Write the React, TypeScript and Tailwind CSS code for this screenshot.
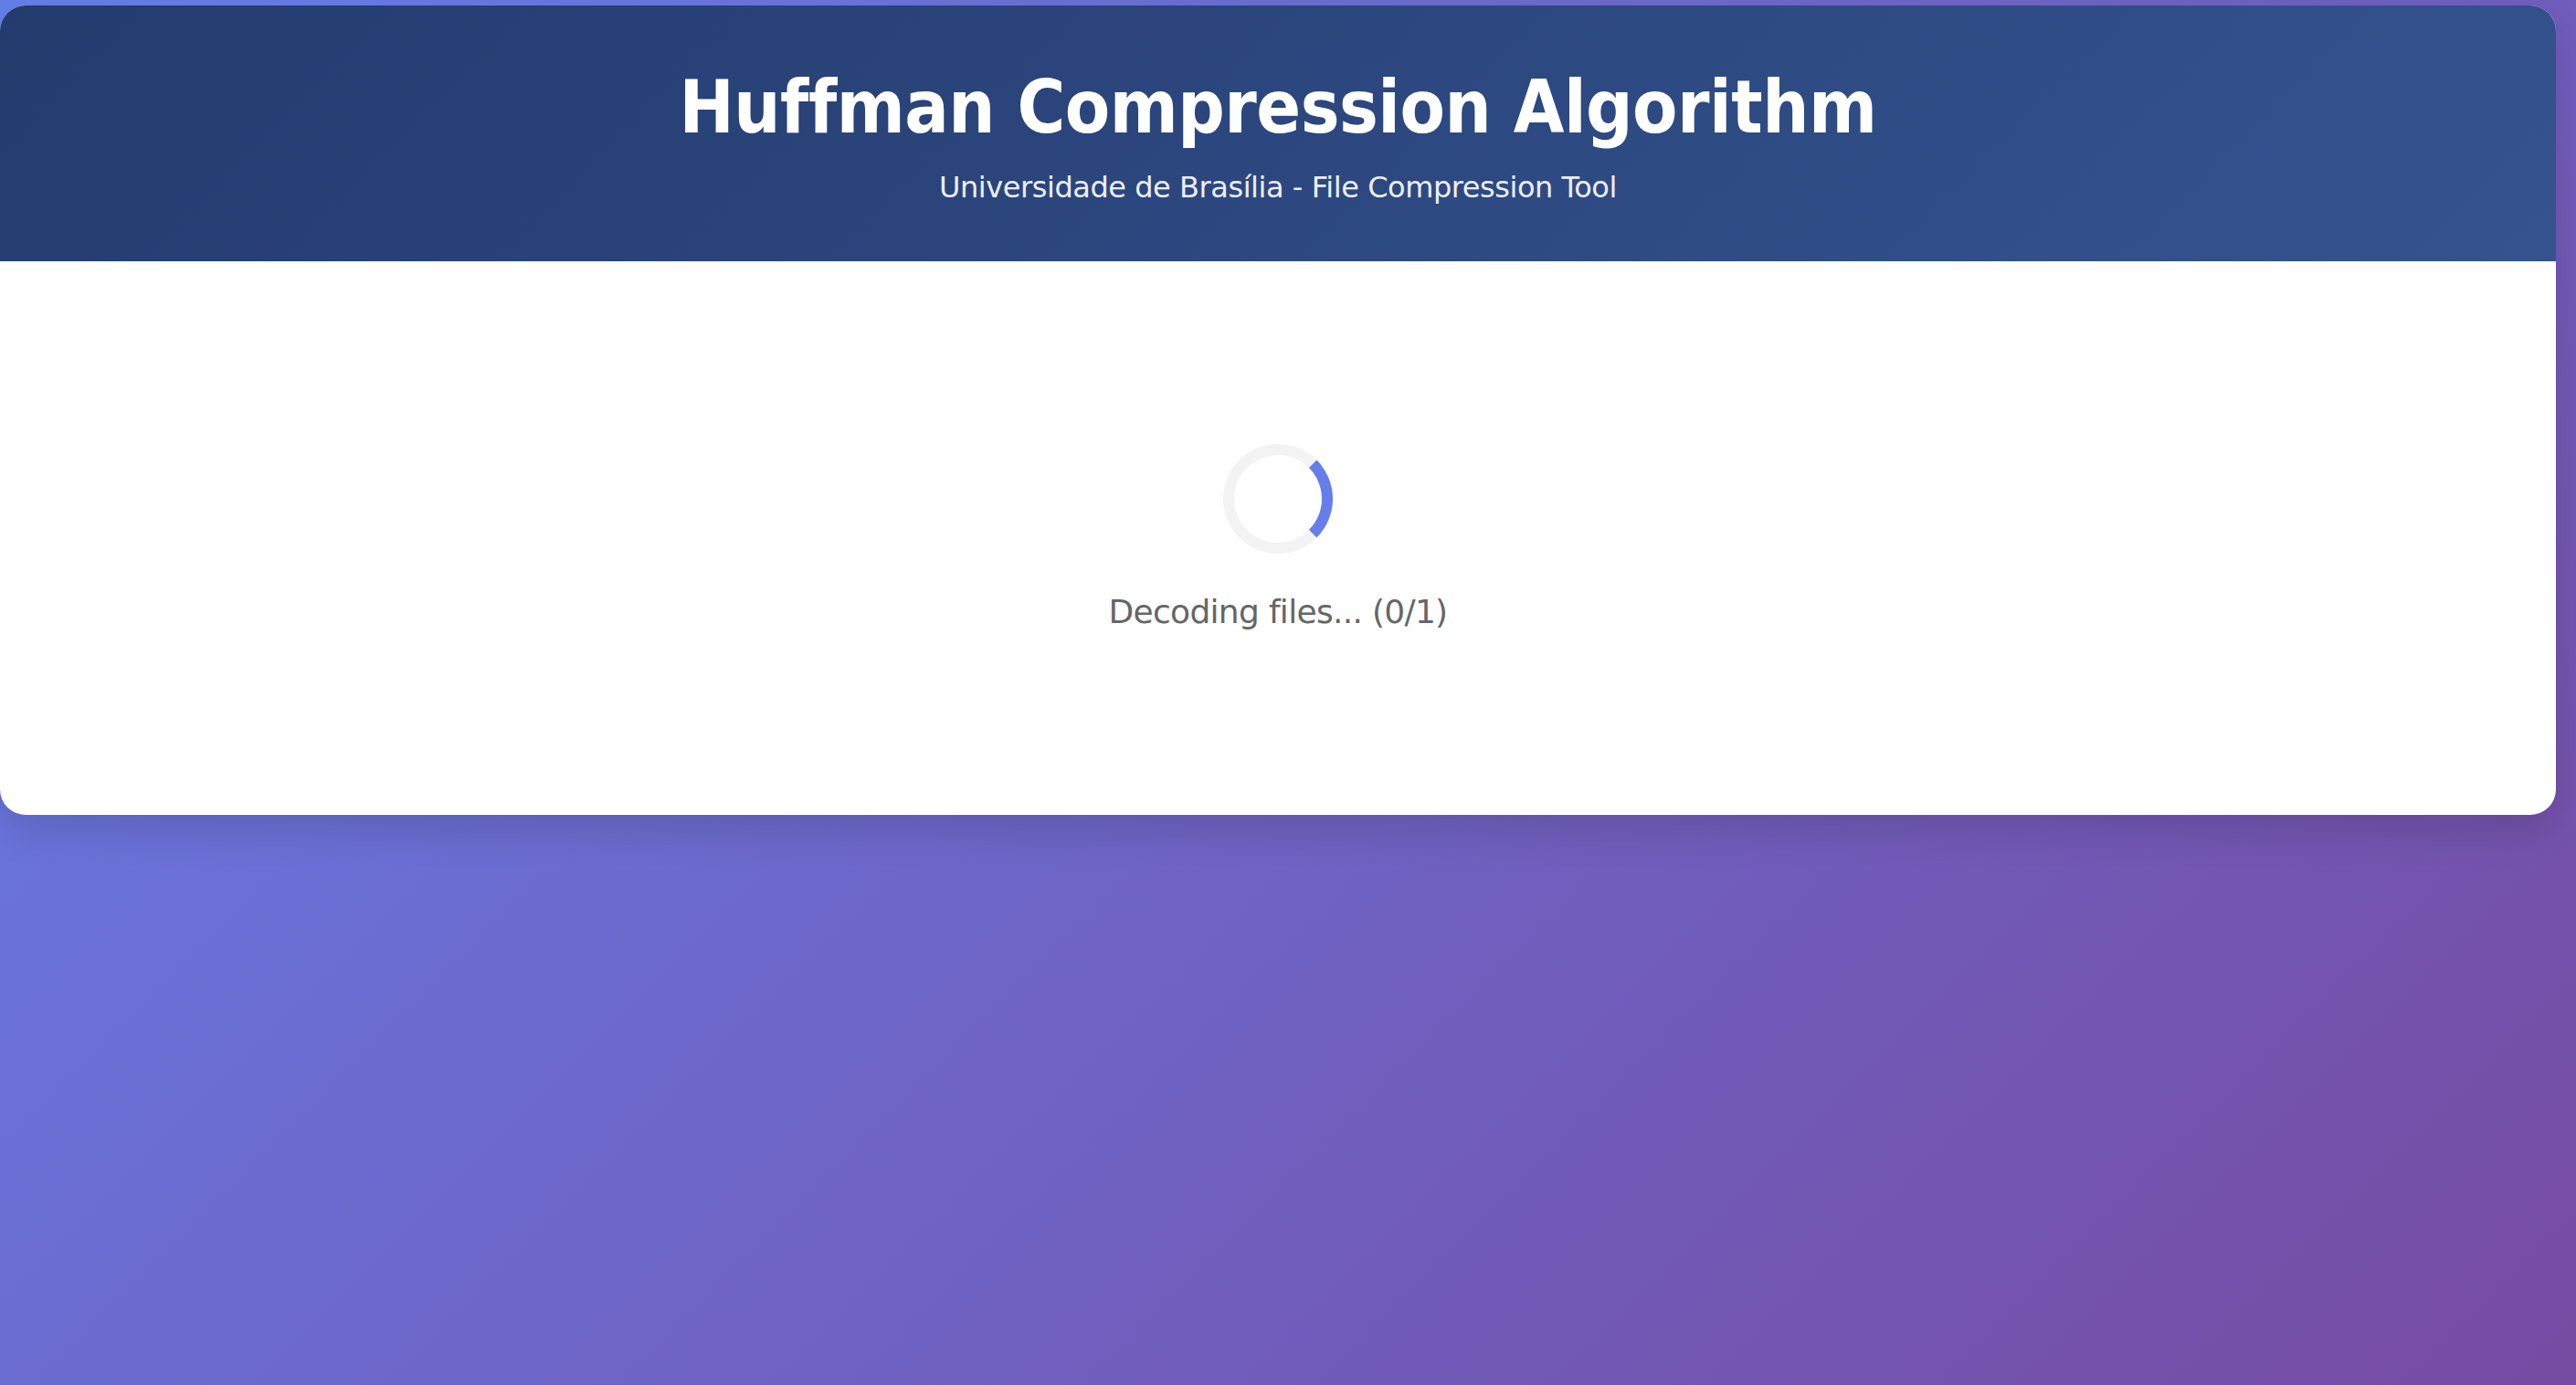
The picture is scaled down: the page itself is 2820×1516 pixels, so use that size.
export default function App() {
  return (
    <div className="min-h-[1516px] w-full bg-[linear-gradient(135deg,#667eea_0%,#764ba2_100%)] pt-[6px] overflow-hidden">
      <div className="w-[2798px] rounded-[28px] overflow-hidden bg-white shadow-[0_20px_40px_rgba(0,0,0,0.12)]">
        <div className="h-[280px] bg-[linear-gradient(135deg,#243b6e_0%,#34538f_100%)] pt-[64px] flex flex-col items-center text-white" style={{ fontFamily: '"DejaVu Sans", Verdana, sans-serif' }}>
          <h1 className="text-[80px] leading-[96px] font-bold tracking-[-0.5px] m-0" style={{ fontFamily: '"DejaVu Sans Condensed", "DejaVu Sans", sans-serif' }}>Huffman Compression Algorithm</h1>
          <p className="mt-[15px] text-[32px] leading-[48px] text-[#eceef6] tracking-[-0.45px]">Universidade de Brasília - File Compression Tool</p>
        </div>
        <div className="h-[606px] pt-[200px] flex flex-col items-center" style={{ fontFamily: '"DejaVu Sans", Verdana, sans-serif' }}>
          <div className="w-[120px] h-[120px] rounded-full border-[12px] border-[#f3f3f3] border-r-[#667eea]" />
          <p className="mt-[37px] text-[36px] leading-[54px] text-[#666666] tracking-[-0.7px]">Decoding files... (0/1)</p>
        </div>
      </div>
    </div>
  );
}
